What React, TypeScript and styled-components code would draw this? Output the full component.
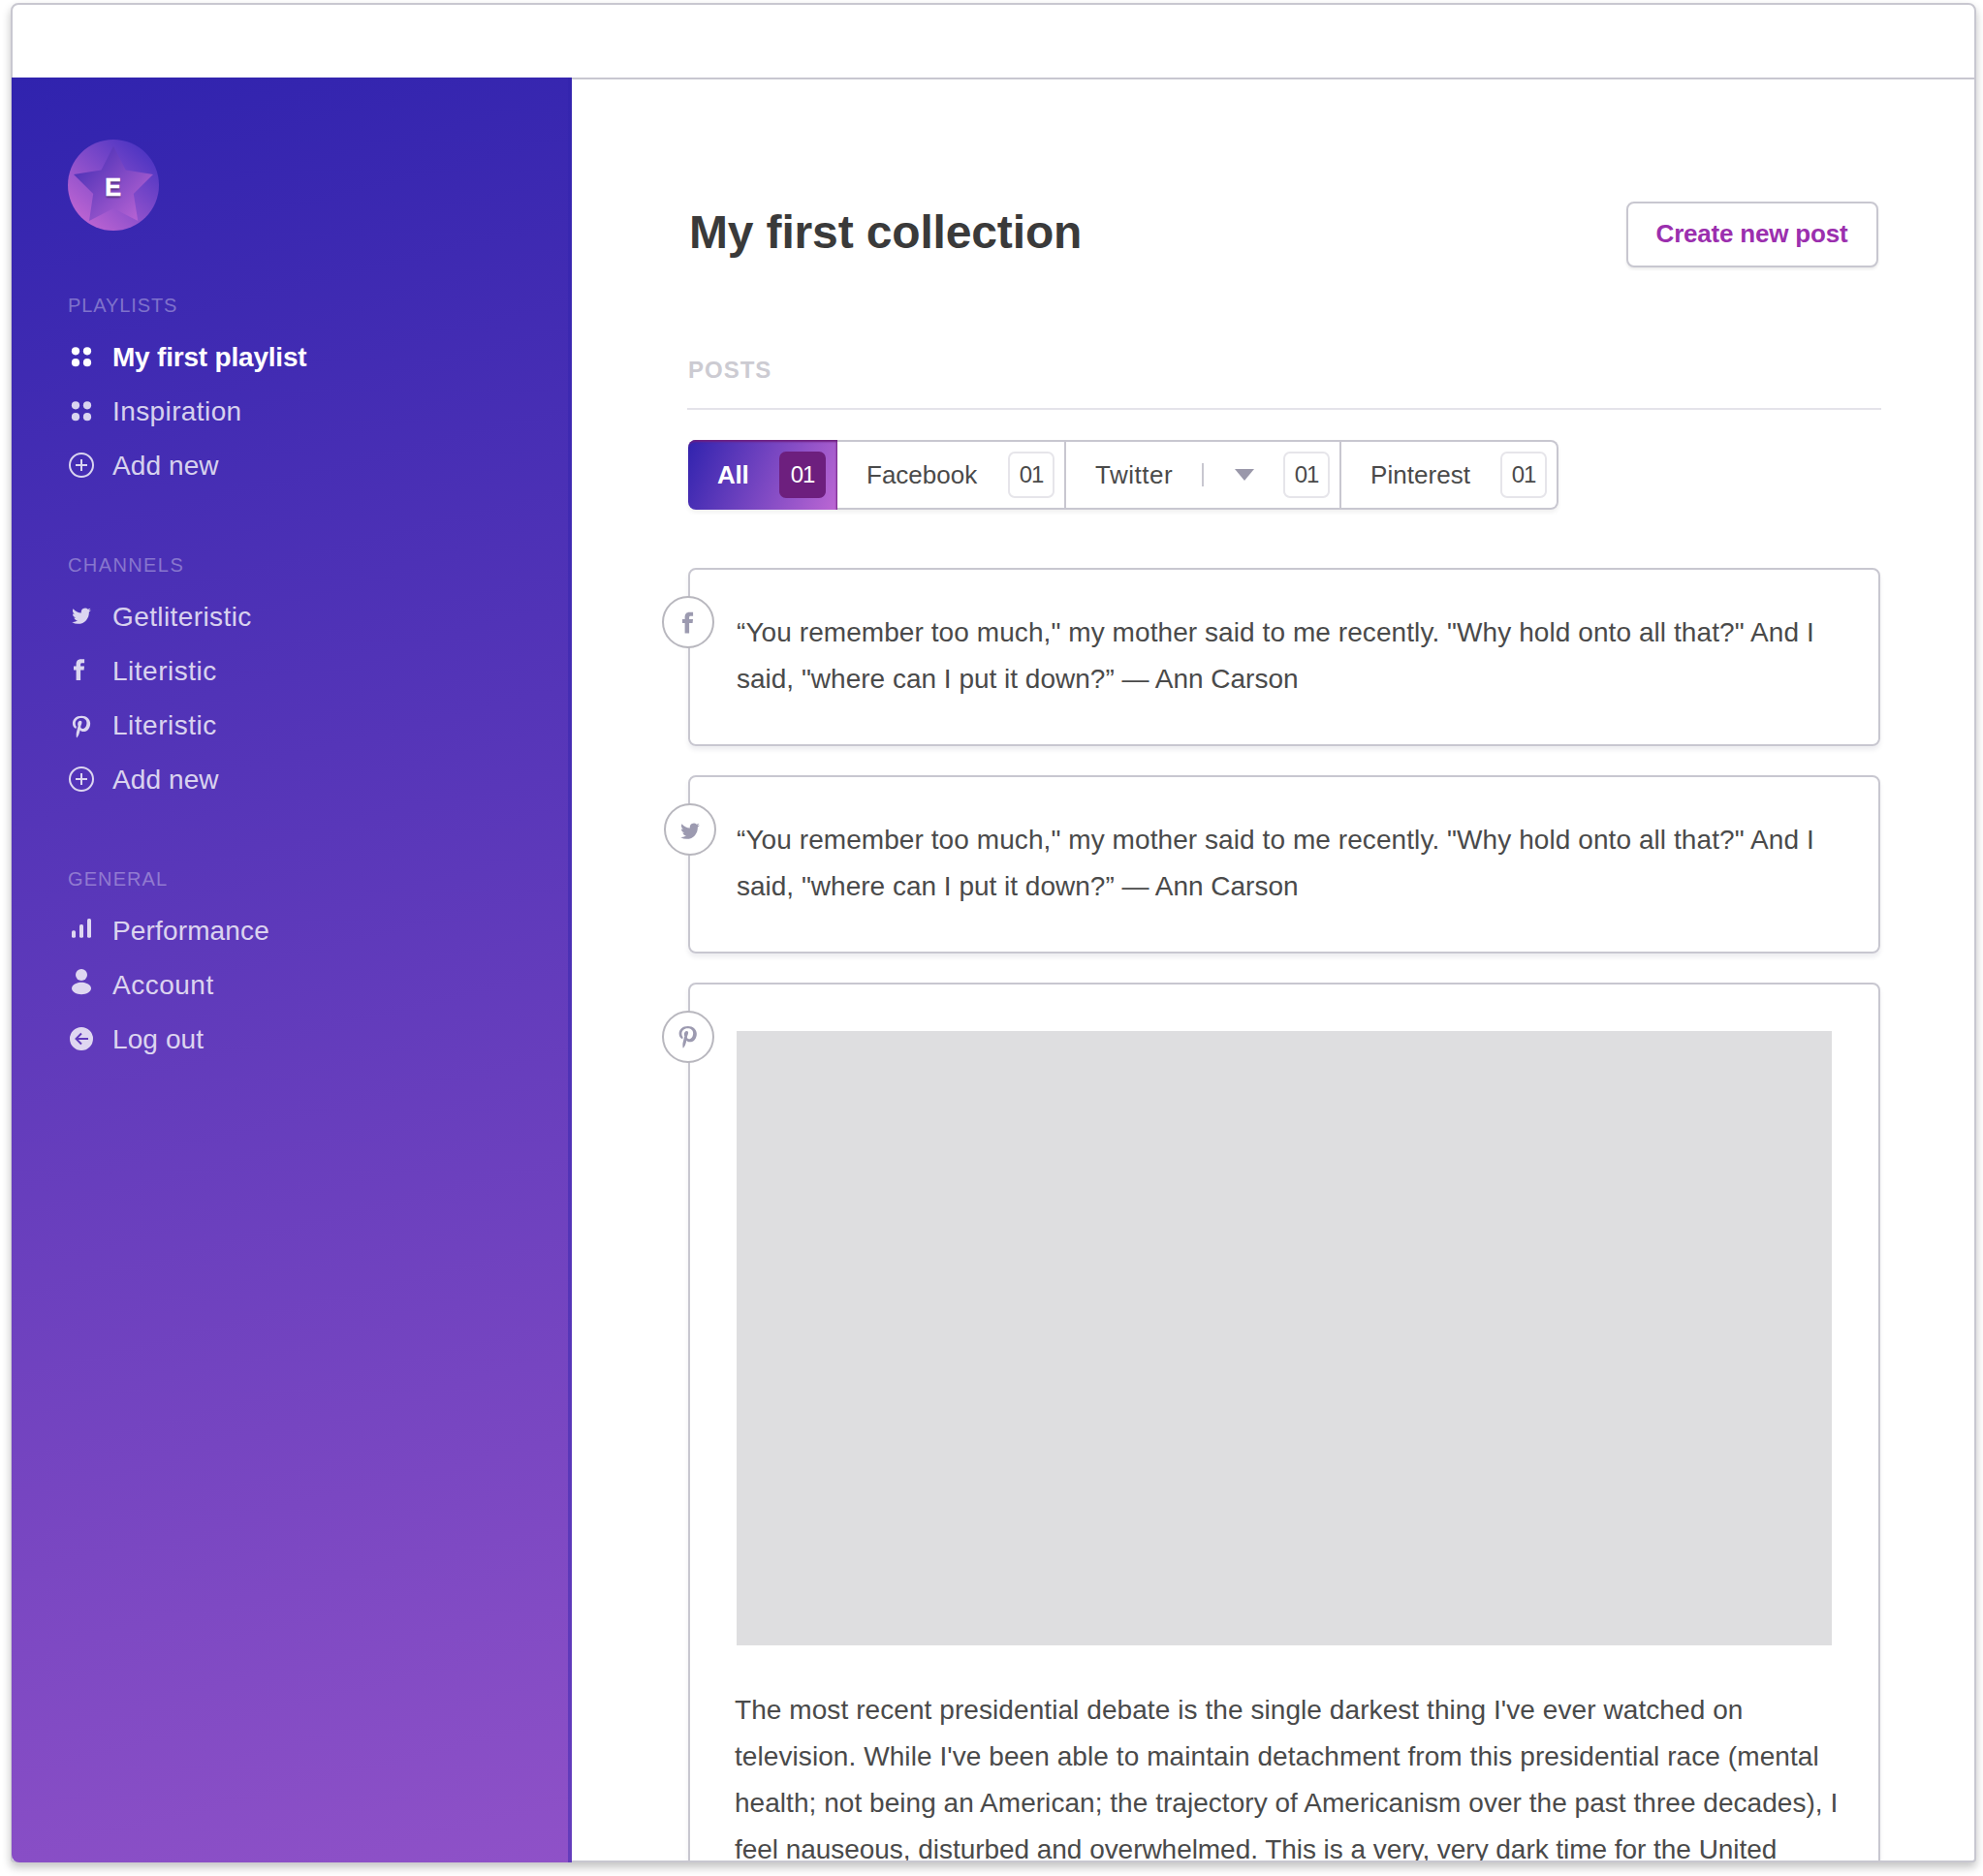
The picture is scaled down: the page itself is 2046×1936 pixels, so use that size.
import React from 'react';
import styled, { createGlobalStyle, css } from 'styled-components';

const LINE = '#c8c7d0';
const INK = '#4a4a4a';

const GlobalStyle = createGlobalStyle`
  *, *::before, *::after { box-sizing: border-box; }
  html, body { margin: 0; background: #fff; overflow: hidden; }
  body { font-family: "Liberation Sans", Arial, sans-serif; color: ${INK}; height: 1936px; }
`;

const Page = styled.div`
  display: flex;
  height: 1936px;
  padding: 3px 7px 14px 11px;
`;

const Window = styled.div`
  display: flex;
  flex-direction: column;
  flex: 1;
  background: #fff;
  border: 2px solid ${LINE};
  border-radius: 8px 8px 4px 4px;
  box-shadow: 0 5px 10px rgba(0, 0, 0, 0.24);
`;

const TopBar = styled.header`
  flex: none;
  height: 77px;
  border-bottom: 2px solid ${LINE};
`;

const Columns = styled.div`
  display: flex;
  flex: 1;
  min-height: 0;
`;

const Sidebar = styled.nav`
  flex: none;
  width: 578px;
  margin: -2px 0 -2px -1px;
  padding: 64px 58px 0;
  border-bottom-left-radius: 8px;
  background: linear-gradient(166deg, #3023ae 0%, #c86dd7 160%);
  box-shadow: inset -4px 0 0 rgba(48, 35, 174, 0.45);
`;

const Avatar = styled.div`
  position: relative;
  width: 94px;
  height: 94px;
  margin-bottom: 65px;
  display: flex;
  align-items: center;
  justify-content: center;
  padding: 4px 1px 0 0;
  color: #fff;
  font-size: 25px;
  font-weight: 700;
  line-height: 28px;
  -webkit-text-stroke: 0.6px #fff;
  text-shadow: 0 2px 2px rgba(0, 0, 0, 0.35);
`;

const AvatarArt = styled.svg`
  position: absolute;
  inset: 0;
`;

const Initial = styled.span`
  position: relative;
`;

const Section = styled.section`
  margin-bottom: 63px;
`;

const SectionLabel = styled.h2<{ $track: number }>`
  margin: 0 0 13px;
  font-size: 20px;
  font-weight: 400;
  line-height: 24px;
  letter-spacing: ${(p) => p.$track}px;
  color: rgba(255, 255, 255, 0.35);
`;

const Item = styled.a<{ $active?: boolean; $track?: number }>`
  display: flex;
  align-items: center;
  gap: 18px;
  height: 56px;
  font-size: 28px;
  font-weight: ${(p) => (p.$active ? 700 : 400)};
  letter-spacing: ${(p) => p.$track ?? 0}px;
  color: ${(p) => (p.$active ? '#fff' : 'rgba(255, 255, 255, 0.8)')};
`;

const ItemLabel = styled.span`
  padding-top: 2px;
  line-height: 54px;
`;

const Icon = styled.svg`
  flex: none;
  width: 28px;
  height: 28px;
  overflow: visible;
  fill: currentColor;
`;

const Main = styled.main`
  flex: 1;
  min-width: 0;
  overflow: hidden;
  padding: 126px 97px 0 120px;
`;

const TitleRow = styled.div`
  display: flex;
  align-items: center;
  justify-content: space-between;
  height: 68px;
  padding-right: 2px;
`;

const Title = styled.h1`
  margin: 0;
  padding: 0 0 5px 1px;
  font-size: 48px;
  line-height: 56px;
  font-weight: 700;
  letter-spacing: -0.15px;
  color: #3a3a3a;
`;

const CreateButton = styled.button`
  width: 260px;
  height: 68px;
  padding: 0 1px 2px 0;
  border: 2px solid ${LINE};
  border-radius: 8px;
  background: #fff;
  box-shadow: 0 2px 3px rgba(0, 0, 0, 0.08);
  color: #9b2fae;
  font: 700 26px/30px "Liberation Sans", Arial, sans-serif;
  letter-spacing: -0.2px;
`;

const PostsHeading = styled.h3`
  margin: 92px -1px 31px;
  padding: 0 0 25px 1px;
  border-bottom: 2px solid #e4e3ea;
  font-size: 24px;
  line-height: 28px;
  font-weight: 700;
  letter-spacing: 1px;
  color: #cccbd2;
`;

const Tabs = styled.div`
  display: inline-flex;
  height: 72px;
  margin-bottom: 60px;
  border-radius: 8px;
  box-shadow: 0 3px 4px rgba(0, 0, 0, 0.06);
`;

const Tab = styled.div<{ $width: number; $active?: boolean }>`
  display: flex;
  align-items: center;
  justify-content: space-between;
  width: ${(p) => p.$width}px;
  padding: 0 10px 0 30px;
  border: 2px solid ${LINE};
  border-left: 0;
  background: #fff;
  font-size: 26px;
  line-height: 30px;

  &:last-child { border-radius: 0 8px 8px 0; }

  ${(p) => p.$active && css`
    padding: 0 12px 0 30px;
    border: 0;
    border-radius: 8px 0 0 8px;
    background: linear-gradient(113deg, #3023ae 0%, #c86dd7 108%);
    box-shadow: inset -1px 2px 2px #6f1f7f;
    color: #fff;
    font-weight: 700;
  `}
`;

const TabLabel = styled.span<{ $track?: number }>`
  letter-spacing: ${(p) => p.$track ?? 0}px;
`;

const Badge = styled.span<{ $active?: boolean }>`
  display: flex;
  align-items: center;
  justify-content: center;
  width: 48px;
  height: 48px;
  border: 2px solid #e6e5ea;
  border-radius: 7px;
  font-size: 24px;
  font-weight: 400;
  letter-spacing: -1px;

  ${(p) => p.$active && css`
    border-color: #6d1f7e;
    background: #6d1f7e;
  `}
`;

const Chooser = styled.span`
  display: flex;
  align-items: center;
  gap: 32px;
`;

const Bar = styled.span`
  width: 2px;
  height: 24px;
  background: ${LINE};
`;

const Caret = styled.span`
  border: 10px solid transparent;
  border-top: 12px solid #9a98aa;
  border-bottom: 0;
`;

const Feed = styled.div`
  display: flex;
  flex-direction: column;
  gap: 30px;
`;

const Card = styled.article<{ $height: number }>`
  position: relative;
  height: ${(p) => p.$height}px;
  padding: 41px 48px 0;
  border: 2px solid ${LINE};
  border-radius: 8px;
  box-shadow: 0 4px 5px rgba(20, 20, 60, 0.07);
`;

const Source = styled.span<{ $shift?: number; $iconX?: number; $iconY?: number }>`
  position: absolute;
  top: 27px;
  left: ${(p) => -29 + (p.$shift ?? 0)}px;
  display: flex;
  align-items: center;
  justify-content: center;
  width: 54px;
  height: 54px;
  border: 2px solid #b8b7be;
  border-radius: 50%;
  background: #fff;
  color: #9c9ab0;

  svg { transform: translate(${(p) => p.$iconX ?? 0}px, ${(p) => p.$iconY ?? 0}px); }
`;

const Text = styled.p<{ $outdent?: boolean }>`
  margin: 0 -40px 0 ${(p) => (p.$outdent ? -2 : 0)}px;
  font-size: 28px;
  line-height: 48px;
`;

const Line = styled.span<{ $track: number }>`
  display: block;
  white-space: nowrap;
  letter-spacing: ${(p) => p.$track}px;
`;

const Picture = styled.div`
  width: 1130px;
  height: 634px;
  margin: 7px 0 43px;
  background: #dedee0;
`;

const TwitterIcon = () => (
  <Icon viewBox="0 0 28 28">
    <path transform="translate(4.200 3.600) scale(.82 .84)" d="M23.95 4.57a10 10 0 0 1-2.82.77 4.96 4.96 0 0 0 2.16-2.72c-.95.55-2 .96-3.12 1.18a4.92 4.92 0 0 0-8.38 4.48C7.69 8.09 4.07 6.13 1.64 3.16a4.82 4.82 0 0 0-.67 2.48c0 1.71.87 3.21 2.19 4.1a4.9 4.9 0 0 1-2.23-.62v.06a4.92 4.92 0 0 0 3.95 4.83 5 5 0 0 1-2.21.08 4.94 4.94 0 0 0 4.6 3.42A9.87 9.87 0 0 1 0 19.54a13.99 13.99 0 0 0 7.55 2.21c9.05 0 14-7.5 14-13.98 0-.21 0-.42-.02-.63a9.94 9.94 0 0 0 2.46-2.55z" />
  </Icon>
);

const FacebookIcon = () => (
  <Icon viewBox="0 0 28 28">
    <path d="M8.600 24V13.500H6v-4h2.600V7.800C8.600 4.300 10 2.200 13.600 2.200h3.500v4h-2.200c-1.600 0-1.800.6-1.800 1.700v1.600H17l-.4 4h-3.500V24z" />
  </Icon>
);

const PinterestIcon = () => (
  <Icon viewBox="0 0 28 28">
    <path transform="translate(-2.200 3.400) scale(1.32 1.25)" d="M12.400 1C8 1 5.400 3.800 5.400 7.200c0 1.700.9 3.700 2.300 4.300.4.100.4 0 .5-.3l.2-.8c0-.2 0-.3-.1-.5-.5-.6-.8-1.500-.8-2.500 0-2.400 1.700-4.500 4.600-4.500 2.600 0 4.300 1.600 4.300 4 0 2.700-1.300 4.800-3.200 4.800-1 0-1.700-.8-1.500-1.800.3-1.200.9-2.500.9-3.400 0-.8-.4-1.400-1.300-1.400-1 0-1.900 1.100-1.900 2.500 0 .9.300 1.600.3 1.600L8.400 14.700c-.3 1.600-.1 3.500 0 4.200.2.200.4.200.5 0 .8-1.100 1.400-2.300 1.700-3.500l.7-2.600c.4.700 1.400 1.300 2.500 1.300 3.400 0 5.400-3.100 5.400-6.900C19.200 3.700 16.400 1 12.400 1z" />
  </Icon>
);

const GridIcon = () => (
  <Icon viewBox="0 0 28 28">
    <circle cx="8" cy="8.300" r="4.100" />
    <circle cx="20" cy="8.300" r="4.100" />
    <circle cx="8" cy="20.200" r="4.100" />
    <circle cx="20" cy="20.200" r="4.100" />
  </Icon>
);

const PlusIcon = () => (
  <Icon viewBox="0 0 28 28">
    <circle cx="14" cy="14" r="12" fill="none" stroke="currentColor" strokeWidth="2" />
    <path d="M8 13h5V8h2v5h5v2h-5v5h-2v-5H8z" />
  </Icon>
);

const BarsIcon = () => (
  <Icon viewBox="0 0 28 28">
    <rect x="4" y="14.300" width="4" height="7.500" rx="1.500" />
    <rect x="12" y="8" width="4" height="13.800" rx="1.500" />
    <rect x="20" y="2" width="4" height="19.800" rx="1.500" />
  </Icon>
);

const UserIcon = () => (
  <Icon viewBox="0 0 28 28">
    <circle cx="14" cy="4" r="6" />
    <path d="M14 11.800c5 0 10 2.600 10 6.300s-5 6.100-10 6.100-10-2.400-10-6.100 5-6.300 10-6.300z" />
  </Icon>
);

const LogoutIcon = () => (
  <Icon viewBox="0 0 28 28">
    <path fillRule="evenodd" d="M14 2a12 12 0 1 0 0 24 12 12 0 0 0 0-24zM13.300 7.800l1.400 1.400-3.800 3.800H21v2H10.900l3.800 3.800-1.400 1.400L7.100 14z" />
  </Icon>
);

const AvatarStar = () => (
  <AvatarArt viewBox="0 0 94 94" width="94" height="94">
    <defs>
      <linearGradient id="disc" x1="0.15" y1="0.9" x2="0.85" y2="0.1">
        <stop offset="0" stopColor="#bd64d2" />
        <stop offset="1" stopColor="#4c34c2" />
      </linearGradient>
      <linearGradient id="star" x1="0.1" y1="0.15" x2="0.85" y2="0.85">
        <stop offset="0" stopColor="#4a30b6" />
        <stop offset="1" stopColor="#b160d2" />
      </linearGradient>
    </defs>
    <circle cx="47" cy="47" r="47" fill="url(#disc)" />
    <path fill="url(#star)" d="M47 7L59.700 31.500 88 36 67.800 56 72.300 84 47 71 22 84 26.200 56 6 36 34.500 31.500z" />
  </AvatarArt>
);

type NavItem = { label: string; icon: React.FC; track?: number; active?: boolean };

const sections: { label: string; track: number; items: NavItem[] }[] = [
  {
    label: 'PLAYLISTS',
    track: 0.9,
    items: [
      { label: 'My first playlist', icon: GridIcon, track: -0.2, active: true },
      { label: 'Inspiration', icon: GridIcon, track: 0.4 },
      { label: 'Add new', icon: PlusIcon, track: 0.1 },
    ],
  },
  {
    label: 'CHANNELS',
    track: 1.4,
    items: [
      { label: 'Getliteristic', icon: TwitterIcon, track: 0.4 },
      { label: 'Literistic', icon: FacebookIcon, track: 0.5 },
      { label: 'Literistic', icon: PinterestIcon, track: 0.5 },
      { label: 'Add new', icon: PlusIcon, track: 0.1 },
    ],
  },
  {
    label: 'GENERAL',
    track: 1.1,
    items: [
      { label: 'Performance', icon: BarsIcon, track: 0.15 },
      { label: 'Account', icon: UserIcon, track: 0.5 },
      { label: 'Log out', icon: LogoutIcon, track: 0.1 },
    ],
  },
];

const quote = [
  { text: '“You remember too much," my mother said to me recently. "Why hold onto all that?" And I', track: 0.075 },
  { text: 'said, "where can I put it down?” — Ann Carson', track: 0 },
];

const essay = [
  { text: "The most recent presidential debate is the single darkest thing I've ever watched on", track: 0.075 },
  { text: "television. While I've been able to maintain detachment from this presidential race (mental", track: 0.075 },
  { text: 'health; not being an American; the trajectory of Americanism over the past three decades), I', track: 0.04 },
  { text: 'feel nauseous, disturbed and overwhelmed. This is a very, very dark time for the United', track: -0.043 },
];

const Lines = ({ lines }: { lines: { text: string; track: number }[] }) => (
  <>
    {lines.map((l) => (
      <Line key={l.text} $track={l.track}>{l.text}</Line>
    ))}
  </>
);

export default function App() {
  return (
    <>
      <GlobalStyle />
      <Page>
        <Window>
          <TopBar />
          <Columns>
            <Sidebar>
              <Avatar>
                <AvatarStar />
                <Initial>E</Initial>
              </Avatar>
              {sections.map((s) => (
                <Section key={s.label}>
                  <SectionLabel $track={s.track}>{s.label}</SectionLabel>
                  {s.items.map((it, i) => (
                    <Item key={i} $active={it.active} $track={it.track}>
                      <it.icon />
                      <ItemLabel>{it.label}</ItemLabel>
                    </Item>
                  ))}
                </Section>
              ))}
            </Sidebar>
            <Main>
              <TitleRow>
                <Title>My first collection</Title>
                <CreateButton>Create new post</CreateButton>
              </TitleRow>
              <PostsHeading>POSTS</PostsHeading>
              <Tabs>
                <Tab $width={154} $active>
                  <TabLabel $track={-0.3}>All</TabLabel>
                  <Badge $active>01</Badge>
                </Tab>
                <Tab $width={236}>
                  <TabLabel>Facebook</TabLabel>
                  <Badge>01</Badge>
                </Tab>
                <Tab $width={284}>
                  <TabLabel $track={0.5}>Twitter</TabLabel>
                  <Chooser>
                    <Bar />
                    <Caret />
                  </Chooser>
                  <Badge>01</Badge>
                </Tab>
                <Tab $width={224}>
                  <TabLabel $track={0.05}>Pinterest</TabLabel>
                  <Badge>01</Badge>
                </Tab>
              </Tabs>
              <Feed>
                <Card $height={184}>
                  <Source $iconX={2} $iconY={1.500}><FacebookIcon /></Source>
                  <Text><Lines lines={quote} /></Text>
                </Card>
                <Card $height={184}>
                  <Source $shift={2} $iconY={2}><TwitterIcon /></Source>
                  <Text><Lines lines={quote} /></Text>
                </Card>
                <Card $height={1100}>
                  <Source $iconX={-0.300} $iconY={-1.700}><PinterestIcon /></Source>
                  <Picture />
                  <Text $outdent><Lines lines={essay} /></Text>
                </Card>
              </Feed>
            </Main>
          </Columns>
        </Window>
      </Page>
    </>
  );
}
